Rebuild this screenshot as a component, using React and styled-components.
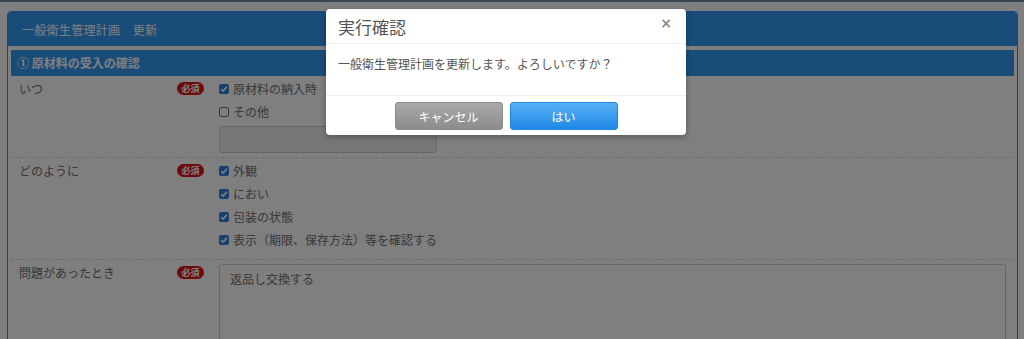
import React from 'react';
import styled, { createGlobalStyle } from 'styled-components';

const Global = createGlobalStyle`
    html, body {
        margin: 0;
        padding: 0;
        background: #ffffff;
        font-family: 'Noto Sans CJK JP', 'Noto Sans', sans-serif;
        font-size: 12px;
        color: #666;
        height: 339px;
        overflow: hidden;
    }
`;

const Page = styled.div`
    position: relative;
    width: 1024px;
    height: 339px;
    overflow: hidden;
`;

const TopLine = styled.div`
    height: 2px;
    background: #74889e;
`;

const Main = styled.div`
    padding: 9px 6px 0 7px;
`;

const Panel = styled.div`
    border: 1px solid #2f91ea;
    border-radius: 4px;
    background: #fff;
`;

const PanelHeading = styled.div`
    height: 34px;
    line-height: 35px;
    padding-left: 14px;
    background: #3399f3;
    color: #fff;
    font-size: 12px;
    border-radius: 3px 3px 0 0;
    letter-spacing: 0.3px;
`;

const PanelBody = styled.div`
    padding: 4px 3px 0 3px;
`;

const SectionTitle = styled.div`
    height: 26px;
    line-height: 26px;
    padding-left: 6px;
    background: #3399f3;
    color: #fff;
    font-weight: bold;
    font-size: 12px;
`;

const Row = styled.div`
    display: flex;
    padding: 1px 0 ${props => props.$pb}px 0;
    border-top: ${props => props.$first ? 'none' : '1px dashed #dcdcdc'};
`;

const LabelCell = styled.div`
    width: 200px;
    flex: none;
    display: flex;
    justify-content: space-between;
    align-items: flex-start;
    padding: 0 7px 0 8px;
    box-sizing: border-box;
    line-height: 23px;
    color: #707070;
`;

const Badge = styled.span`
    display: inline-block;
    margin-top: 5px;
    width: 27px;
    height: 13px;
    line-height: 13px;
    border-radius: 7px;
    background: #dc1414;
    color: #fff;
    font-size: 9px;
    font-weight: bold;
    text-align: center;
`;

const ValueCell = styled.div`
    flex: 1;
    padding: 0 8px;
    display: flex;
    flex-direction: column;
`;

const Option = styled.label`
    display: flex;
    align-items: center;
    gap: 4px;
    height: 23px;
    color: #707070;
`;

const Box = styled.span`
    width: 10px;
    height: 10px;
    box-sizing: border-box;
    border-radius: 2px;
    display: flex;
    align-items: center;
    justify-content: center;
    background: ${props => props.$checked ? '#2f7fe0' : '#fff'};
    border: 1px solid ${props => props.$checked ? '#2f7fe0' : '#666'};
`;

const DisabledInput = styled.div`
    margin-top: 3px;
    width: 218px;
    height: 27px;
    box-sizing: border-box;
    border: 1px solid #cfcfcf;
    border-radius: 3px;
    background: #eeeeee;
`;

const TextArea = styled.div`
    margin-top: 3px;
    height: 90px;
    box-sizing: border-box;
    border: 1px solid #cccccc;
    border-radius: 3px;
    padding: 5px 10px;
    line-height: 18px;
    color: #707070;
    background: #fff;
`;

const Overlay = styled.div`
    position: absolute;
    inset: 0;
    background: rgba(0, 0, 0, 0.5);
`;

const Modal = styled.div`
    position: absolute;
    left: 326px;
    top: 9px;
    width: 360px;
    background: #fff;
    border-radius: 4px;
    box-shadow: 0 2px 6px rgba(0, 0, 0, 0.3);
`;

const ModalHeader = styled.div`
    height: 34px;
    display: flex;
    align-items: center;
    justify-content: space-between;
    padding: 0 12px;
    border-bottom: 1px solid #eeeeee;
`;

const ModalTitle = styled.span`
    font-size: 17px;
    color: #555;
`;

const Close = styled.span`
    font-size: 14px;
    font-weight: bold;
    color: #8c8c8c;
    font-family: 'DejaVu Sans', sans-serif;
    margin-top: -6px;
    margin-right: 2px;
`;

const ModalBody = styled.div`
    height: 52px;
    padding: 11px 12px 0;
    box-sizing: border-box;
    font-size: 12px;
    color: #555;
    line-height: 17px;
    border-bottom: 1px solid #eeeeee;
`;

const ModalFooter = styled.div`
    display: flex;
    justify-content: center;
    gap: 7px;
    padding: 6px 0 5px;
`;

const Button = styled.button`
    width: 108px;
    height: 28px;
    border-radius: 3px;
    font-family: inherit;
    font-size: 12px;
    color: #fff;
    cursor: pointer;
    border: 1px solid ${props => props.$primary ? '#1f87e4' : '#8a8a8a'};
    background: ${props => props.$primary
        ? 'linear-gradient(#58b0f4, #1e88e8)'
        : 'linear-gradient(#a9a9a9, #8c8c8c)'};
`;

const Check = () => (
    <svg width="8" height="8" viewBox="0 0 8 8">
        <path d="M1.2 4.2 L3.2 6.1 L6.9 1.8" stroke="#fff" strokeWidth="1.5" fill="none" />
    </svg>
);

const Choice = ({ checked, children }) => (
    <Option>
        <Box $checked={checked}>{checked && <Check />}</Box>
        {children}
    </Option>
);

const App = () => {
    return <Page>
        <Global />
        <TopLine />
        <Main>
            <Panel>
                <PanelHeading>一般衛生管理計画　更新</PanelHeading>
                <PanelBody>
                    <SectionTitle>① 原材料の受入の確認</SectionTitle>
                    <Row $first $pb={4}>
                        <LabelCell>いつ<Badge>必須</Badge></LabelCell>
                        <ValueCell>
                            <Choice checked>原材料の納入時</Choice>
                            <Choice>その他</Choice>
                            <DisabledInput />
                        </ValueCell>
                    </Row>
                    <Row $pb={8}>
                        <LabelCell>どのように<Badge>必須</Badge></LabelCell>
                        <ValueCell>
                            <Choice checked>外観</Choice>
                            <Choice checked>におい</Choice>
                            <Choice checked>包装の状態</Choice>
                            <Choice checked>表示（期限、保存方法）等を確認する</Choice>
                        </ValueCell>
                    </Row>
                    <Row $pb={8}>
                        <LabelCell>問題があったとき<Badge>必須</Badge></LabelCell>
                        <ValueCell>
                            <TextArea>返品し交換する</TextArea>
                        </ValueCell>
                    </Row>
                </PanelBody>
            </Panel>
        </Main>
        <Overlay />
        <Modal>
            <ModalHeader>
                <ModalTitle>実行確認</ModalTitle>
                <Close>×</Close>
            </ModalHeader>
            <ModalBody>一般衛生管理計画を更新します。よろしいですか？</ModalBody>
            <ModalFooter>
                <Button>キャンセル</Button>
                <Button $primary>はい</Button>
            </ModalFooter>
        </Modal>
    </Page>
}

export default App;
